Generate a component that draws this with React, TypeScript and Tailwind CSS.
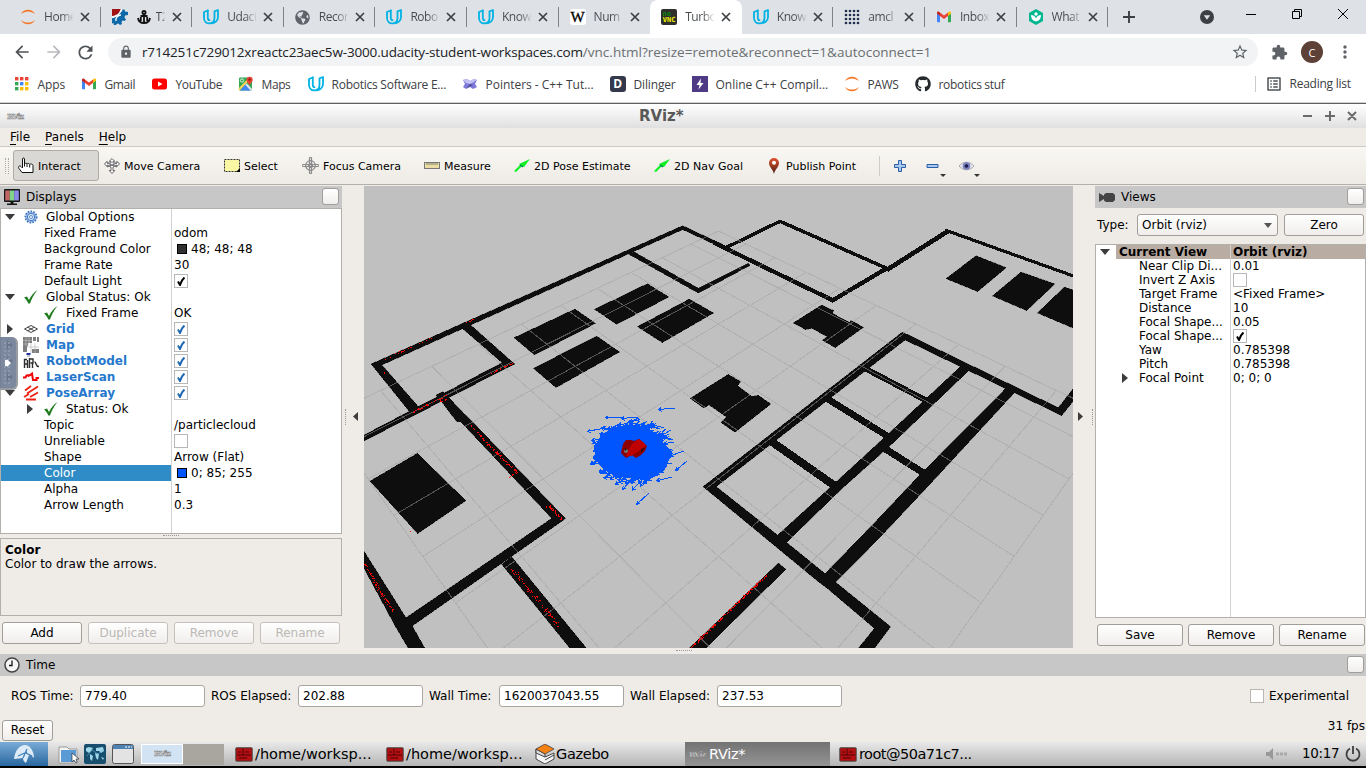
import React from "react";
import { MdArrowBack, MdArrowForward, MdRefresh, MdLock, MdStarBorder, MdExtension, MdMoreVert, MdListAlt } from "react-icons/md";
import { FaGithub, FaGlobeAmericas } from "react-icons/fa";

/* ---------- browser icons ---------- */

const Jupyter = () => (
  <svg viewBox="0 0 16 16" className="h-4 w-4" fill="#f37726">
    <path d="M1 5C2.600 2 5 .8 8 .8s5.400 1.200 7 4.200C12.900 3.200 10.500 2.400 8 2.400S3.100 3.200 1 5z" />
    <path d="M1 11C2.600 14 5 15.200 8 15.200s5.400-1.200 7-4.200c-2.100 1.800-4.500 2.600-7 2.600S3.100 12.800 1 11z" />
  </svg>
);
const Udacity = () => (
  <svg viewBox="0 0 16 16" className="h-4 w-4" fill="none" stroke="#02b3e4" strokeWidth="1.800" strokeLinejoin="round" strokeLinecap="round">
    <path d="M4.800 1.500L1 3v5.800c0 3.300 2.200 5.600 5.200 5.600 3.400 0 5.300-2.400 5.300-5.600V2.300L15 1v7c0 4-3.400 6.400-8.300 6.400" />
    <path d="M4.800 1.500v6.700c0 2 .7 3 1.700 3" />
  </svg>
);
const Gear = () => (
  <svg viewBox="0 0 16 16" className="h-4 w-4">
    <path d="M8 3l2-.5.500-2 2 0 .500 2L16 3v3l-3 .5-.5 2 1.500 2-1.500 1.500-2-.5-1 1.500.5 2-2 1-1.500-1.500-2 .5-.5 1.500H2L1.500 14 0 14.500V9l3-1z" fill="#0d69a8" />
    <path d="M4 12a5 5 0 015-6" fill="none" stroke="#fff" strokeWidth="1.300" />
    <path d="M0 0h9L6 5 1 7H0z" fill="#a31212" />
    <path d="M9.500 0C9 4 5 8 0 8.500" stroke="#fff" strokeWidth="1.300" fill="none" />
  </svg>
);
const Anchor = () => (
  <svg viewBox="0 0 14 14" className="h-3.5 w-3.5" fill="none" stroke="#111" strokeWidth="1.800">
    <circle cx="7" cy="2.600" r="1.600" />
    <path d="M7 4v9M3.500 6h7M1 8c.5 3.500 3 5 6 5s5.500-1.500 6-5M3.800 7v4M10.200 7v4" />
  </svg>
);
const Wiki = () => (
  <span className="flex h-4 w-4 items-center justify-center rounded-[3px] bg-white font-['Liberation_Serif',serif] text-[15px] leading-none text-black [-webkit-text-stroke:0.3px_#000]">W</span>
);
const NoVnc = () => (
  <span className="flex h-4 w-4 flex-col items-center justify-center rounded-[2px] bg-[#302f2c] font-['DejaVu_Sans_Mono',monospace] text-[7px] font-bold leading-[6.500px]">
    <span className="-ml-[5px] text-[#0a8a0a]">no</span>
    <span className="text-[#f3f300]">VNC</span>
  </span>
);
const Dots = () => (
  <svg viewBox="0 0 16 16" className="h-4 w-4" fill="#22304f">
    {[0, 1, 2, 3].map((r) => [0, 1, 2, 3].map((c) => <circle key={`${r}${c}`} cx={2 + c * 4} cy={2 + r * 4} r="1.350" />))}
  </svg>
);
const Gmail = () => (
  <svg viewBox="0 0 16 16" className="h-4 w-4">
    <path d="M1 4v8.500c0 .5.300.8.800.8H4V6.500z" fill="#4285f4" />
    <path d="M15 4v8.500c0 .5-.3.800-.8.800H12V6.500z" fill="#34a853" />
    <path d="M12 3.600V7l3-2.200V3.900c0-1.300-1.300-1.700-2.200-1z" fill="#fbbc04" />
    <path d="M4 3.600V7L1 4.800V3.900c0-1.300 1.300-1.700 2.200-1z" fill="#c5221f" />
    <path d="M4 3.500l4 3 4-3V7l-4 3-4-3z" fill="#ea4335" />
  </svg>
);
const Shield = () => (
  <svg viewBox="0 0 16 16" className="h-4 w-4">
    <path d="M8 0l7 4v8l-7 4-7-4V4z" fill="#02b78f" />
    <path d="M3 6c2.500 0 4.300 1.200 5 3.500C8.700 7.200 10.500 6 13 6c0 3.800-1.800 6-5 6.500C4.800 12 3 9.800 3 6z" fill="#fff" />
    <circle cx="8" cy="5" r="1.700" fill="#fff" />
  </svg>
);
const AppsGrid = () => {
  const c = ["#ea4335", "#ea4335", "#ea4335", "#34a853", "#4285f4", "#fbbc04", "#34a853", "#fbbc04", "#fbbc04"];
  return (
    <svg viewBox="0 0 16 16" className="h-4 w-4">
      {c.map((f, i) => <rect key={i} x={1 + (i % 3) * 5} y={1 + Math.floor(i / 3) * 5} width="3.400" height="3.400" fill={f} />)}
    </svg>
  );
};
const YouTube = () => (
  <svg viewBox="0 0 16 16" className="h-4 w-4"><rect x="0" y="2.500" width="15" height="11" rx="2.500" fill="#f00" /><path d="M6 5.500v5L10.500 8z" fill="#fff" /></svg>
);
const Maps = () => (
  <svg viewBox="0 0 16 16" className="h-4 w-4">
    <rect x="1" y="1.500" width="13" height="13" rx="1" fill="#34a853" />
    <path d="M7.500 8L14 14.500H2z" fill="#4285f4" /><path d="M1 13.500L12 2" stroke="#fbd75b" strokeWidth="2" />
    <path d="M8 8l6 6.500" stroke="#dde3ea" strokeWidth="2.200" />
    <circle cx="4" cy="4.500" r="1.600" fill="none" stroke="#fff" strokeWidth=".8" />
    <path d="M11.500 10C11 7 8.500 6.500 8.500 3.800a3.100 3.100 0 016.200 0C14.700 6.500 12 7 11.500 10z" fill="#ea4335" /><circle cx="11.600" cy="3.700" r="1.100" fill="#811411" />
  </svg>
);
const Cpp = () => (
  <svg viewBox="0 0 16 16" className="h-4 w-4">
    <path d="M1 4l4-1 3 2 4-2 3 1-2 4 2 3-4 2-3-2-4 2-3-2 2-3z" fill="#7b78d9" />
    <path d="M1 4l4-1 3 2 4-2 3 1-4 2.500L8 8 4 7z" fill="#c3c1f6" /><path d="M8 8l-3 4 6-3z" fill="#4a478f" />
  </svg>
);
const Dil = () => (
  <span className="flex h-4 w-4 items-center justify-center rounded-[3px] bg-[#33394a] font-['Open_Sans',sans-serif] text-[12px] font-bold leading-none text-white">D</span>
);
const Bolt = () => (
  <svg viewBox="0 0 16 16" className="h-4 w-4"><rect width="16" height="16" fill="#4f3a85" /><path d="M9 2.500L4.500 9h3L6.500 13.500 11.500 7h-3z" fill="#fff" /></svg>
);

const Close = () => (
  <svg viewBox="0 0 10 10" className="h-[10px] w-[10px]" stroke="#3c4043" strokeWidth="1.700"><path d="M1 1l8 8M9 1l-8 8" /></svg>
);

type TabT = { t: string; icon: React.ReactNode; active?: boolean; noSep?: boolean; extra?: boolean };
const TABS: TabT[] = [
  { t: "Home", icon: <Jupyter /> },
  { t: "T2", icon: <Gear />, extra: true },
  { t: "Udaci", icon: <Udacity /> },
  { t: "Recor", icon: <FaGlobeAmericas className="h-[15px] w-[15px] text-[#5f6368]" /> },
  { t: "Robo", icon: <Udacity /> },
  { t: "Know", icon: <Udacity /> },
  { t: "Num", icon: <Wiki />, noSep: true },
  { t: "Turbo", icon: <NoVnc />, active: true, noSep: true },
  { t: "Know", icon: <Udacity /> },
  { t: "amcl", icon: <Dots /> },
  { t: "Inbox", icon: <Gmail /> },
  { t: "What", icon: <Shield /> },
];

const Tab = ({ t, icon, active, noSep, extra }: TabT) => (
  <div className={`relative flex h-[34px] w-[91.600px] shrink-0 items-center pl-[11px] ${active ? "rounded-t-lg bg-white" : ""}`}>
    <span className="flex w-4 justify-center">{icon}</span>
    {extra && <span className="ml-[9px]"><Anchor /></span>}
    <span className={`${extra ? "ml-[5px] w-[9px]" : "ml-2 w-[29px]"} h-[18px] overflow-hidden whitespace-nowrap bg-gradient-to-r from-[#45494d] from-60% to-[#45494d]/10 bg-clip-text text-[12px] leading-[18px] tracking-[-0.45px] text-transparent`}>{t}</span>
    <span className="ml-[7px]"><Close /></span>
    {!noSep && <span className="absolute right-0 top-[7px] h-5 w-px bg-[#808387]" />}
  </div>
);

const MARKS: { t: string; icon: React.ReactNode; w: string }[] = [
  { t: "Apps", icon: <AppsGrid />, w: "w-[67px] tracking-[-0.1px]" },
  { t: "Gmail", icon: <Gmail />, w: "w-[71px] tracking-[-0.4px]" },
  { t: "YouTube", icon: <YouTube />, w: "w-[86px] tracking-[-0.4px]" },
  { t: "Maps", icon: <Maps />, w: "w-[70px] tracking-[-0.4px]" },
  { t: "Robotics Software E...", icon: <Udacity />, w: "w-[154px] tracking-[-0.25px]" },
  { t: "Pointers - C++ Tut...", icon: <Cpp />, w: "w-[148px] tracking-[-0.03px]" },
  { t: "Dilinger", icon: <Dil />, w: "w-[82px] tracking-[-0.15px]" },
  { t: "Online C++ Compil...", icon: <Bolt />, w: "w-[152px] tracking-[-0.02px]" },
  { t: "PAWS", icon: <Jupyter />, w: "w-[71px] tracking-[-0.4px]" },
  { t: "robotics stuf", icon: <FaGithub className="h-4 w-4 text-[#24292e]" />, w: "w-[100px] tracking-[-0.3px]" },
];

const Browser = () => (
  <div className="flex h-[104px] flex-col bg-white font-['Open_Sans','Noto_Sans',sans-serif] text-[#3c4043]">
    <div className="flex h-[34px] bg-[#dee1e6] pl-[9px]">
      {TABS.map((t, i) => <Tab key={i} {...t} />)}
      <div className="flex w-[42px] items-center justify-center">
        <svg viewBox="0 0 12 12" className="h-3 w-3" stroke="#3c4043" strokeWidth="1.900"><path d="M6 0v12M0 6h12" /></svg>
      </div>
      <div className="ml-[50px] flex items-center">
        <svg viewBox="0 0 14 14" className="h-3.5 w-3.5"><circle cx="7" cy="7" r="7" fill="#3c4043" /><path d="M3.800 5.200h6.400L7 9.800z" fill="#dee1e6" /></svg>
      </div>
      <div className="ml-[32px] flex h-[28px] items-center gap-[36px]">
        <svg viewBox="0 0 10 10" className="h-2.5 w-2.5" stroke="#000"><path d="M0 5.500h10" /></svg>
        <svg viewBox="0 0 10 10" className="h-2.5 w-2.5" stroke="#000" fill="none"><path d="M.5 2.500h7v7h-7zM2.500 2.500v-2h7v7h-2" /></svg>
        <svg viewBox="0 0 10 10" className="h-2.5 w-2.5" stroke="#000" fill="none"><path d="M0 0l10 10M10 0L0 10" /></svg>
      </div>
    </div>
    <div className="flex h-9 items-center pl-[12px]">
      <MdArrowBack className="h-[20px] w-[20px] text-[#4f5357]" />
      <MdArrowForward className="ml-[12px] h-[20px] w-[20px] text-[#b8babd]" />
      <MdRefresh className="ml-[11px] h-[21px] w-[21px] text-[#4f5357]" />
      <div className="ml-[12px] flex h-7 w-[1150px] items-center rounded-full bg-[#f1f3f4] pl-[11px]">
        <MdLock className="h-[14px] w-[14px] text-[#5f6368]" />
        <span className="ml-[9px] w-[1089px] whitespace-nowrap pt-[1px] text-[13.500px] tracking-[-0.16px] text-[#202124]">r714251c729012xreactc23aec5w-3000.udacity-student-workspaces.com<span className="tracking-[0.01px] text-[#6b6f73]">/vnc.html?resize=remote&amp;reconnect=1&amp;autoconnect=1</span></span>
        <MdStarBorder className="h-[18px] w-[18px] shrink-0 text-[#5f6368]" />
      </div>
      <MdExtension className="ml-[13px] h-[17px] w-[17px] text-[#5f6368]" />
      <span className="ml-[13px] flex h-[22px] w-[22px] items-center justify-center rounded-full bg-[#5d4037] text-[11px] text-white">C</span>
      <MdMoreVert className="ml-[12px] h-[20px] w-[20px] text-[#5f6368]" />
    </div>
    <div className="flex h-8 items-center pb-[4px] pl-[13.500px] text-[12px]">
      {MARKS.map((m) => (
        <div key={m.t} className={`flex shrink-0 items-center gap-2 whitespace-nowrap ${m.w}`}>
          {m.icon}
          <span className="pt-px">{m.t}</span>
        </div>
      ))}
      <span className="ml-[240px] h-4 w-px bg-[#c9cbce]" />
      <MdListAlt className="ml-[9px] h-[18px] w-[18px] text-[#4f5357]" />
      <span className="ml-[7px] whitespace-nowrap tracking-[-0.25px]">Reading list</span>
    </div>
    <div className="h-[2px] border-t border-[#d0d0d0] bg-[#5f5f5f]" />
  </div>
);

/* ---------- RViz icons ---------- */

const Down = () => <svg viewBox="0 0 10 6" className="h-[6px] w-[10px]"><path d="M0 0h10L5 6z" fill="#3c3c3c" /></svg>;
const Right = () => <svg viewBox="0 0 6 10" className="h-[10px] w-[6px]"><path d="M0 0v10l6-5z" fill="#3c3c3c" /></svg>;
const OkMark = () => (
  <svg viewBox="0 0 16 14" className="h-[14px] w-4"><path d="M1 7.500l3-1 2 3.500C8 6 10.500 2.500 14.500 0 10.500 5 8.500 9 7 13.500H5.300C4.300 11 3 9 1 7.500z" fill="#1e7b1e" /></svg>
);
const Flower = () => (
  <svg viewBox="0 0 16 16" className="h-4 w-4">
    <circle cx="8" cy="8" r="5.600" fill="#a9c6ec" stroke="#3f75bf" strokeWidth="1.800" strokeDasharray="1.600 1.200" />
    <circle cx="8" cy="8" r="3.700" fill="#d3e2f6" stroke="#3f75bf" strokeWidth="1" /><circle cx="8" cy="8" r="1.500" fill="#fff" stroke="#3f75bf" strokeWidth=".8" />
  </svg>
);
const GridIcon = () => (
  <svg viewBox="0 0 16 16" className="h-4 w-4" fill="none" stroke="#444" strokeWidth="1"><path d="M1.500 8L8 4.500 14.500 8 8 11.500zM4.700 6.200l6.600 3.600M11.300 6.200L4.700 9.800" /></svg>
);
const MapIcon = () => (
  <svg viewBox="0 0 16 16" className="h-4 w-4">
    <path d="M0 0h9v6H5v3H4v6H0zM10 0h3v4h-3zM14 0h2v5h-2zM9 12h7v4H9z" fill="#7e7e7e" />
    <path d="M0 3.500h9M3 0v9M6 0v6M0 7h6M4 10h12M8 6v10M12 6v10" stroke="#b9b9b9" strokeWidth=".7" />
  </svg>
);
const RobotIcon = () => (
  <svg viewBox="0 0 16 16" className="h-4 w-4">
    <path d="M3.500 0h4v2h-4z" fill="#1c2fa0" /><path d="M4 3h3" stroke="#999" />
    <path d="M1.500 6v9M1 6.500h3M4.500 7v8M6.500 5v10M6.500 6h3.500v4H7.500M9.500 10v5M11.500 9c2 0 1 5 4.500 4.500M2 11h3" fill="none" stroke="#2c2c2c" strokeWidth="1.400" />
  </svg>
);
const LaserIcon = () => (
  <svg viewBox="0 0 16 16" className="h-4 w-4" fill="none" stroke="#f00808" strokeWidth="2"><path d="M0 8.500h2.500l1-2L8 6M5 7.500l4-3 1 6.500h3.500V9H16" /></svg>
);
const PoseIcon = () => (
  <svg viewBox="0 0 16 16" className="h-4 w-4" stroke="#ee2211" strokeWidth="1.800"><path d="M2 5.500l6-4.500M4 8.500l11-7M1 12l5-3M3 14.500h10M7 12l8-4.500" /></svg>
);
const Monitor = () => (
  <svg viewBox="0 0 16 17" className="h-[17px] w-4">
    <rect width="16" height="13" rx="1" fill="#161616" /><rect x="1.200" y="1.500" width="4.600" height="10" fill="#c06464" />
    <rect x="5.800" y="1.500" width="4.400" height="10" fill="#7fd488" /><rect x="10.200" y="1.500" width="4.600" height="10" fill="#8d8bea" />
    <path d="M6.500 13h3v1.500H13V16H3v-1.500h3.500z" fill="#161616" />
  </svg>
);
const Check = ({ on, blue }: { on?: boolean; blue?: boolean }) => (
  <span className="flex h-[14px] w-[14px] items-center justify-center border border-[#b9b6b3] bg-white">
    {on && <svg viewBox="0 0 8 9" className="h-[9px] w-2"><path d="M1 4.500l2 3.500C4 4.500 5 2.500 7.500 .500" fill="none" stroke={blue ? "#1f68b4" : "#000"} strokeWidth="2" /></svg>}
  </span>
);
const Logo = () => (
  <span className="font-['DejaVu_Serif',serif] text-[8px] font-bold tracking-[-1px] text-[#eee] [-webkit-text-stroke:0.6px_#888]">RViz</span>
);
const Hand = () => (
  <svg viewBox="0 0 16 17" className="h-[17px] w-4"><path d="M4.500 11V2c0-1.300 2-1.300 2 0v5c0-1.200 2.500-1.200 2.500.3C9.200 6 11.600 6.200 11.600 7.600 12 6.600 15 6.800 15 8.500V15.500H4L1 11.500C-.2 9.500 1.500 8 3 9.500z" fill="#fff" stroke="#111" /><path d="M6.500 7v2.500M9 7.500v2.500M11.700 8v2.500" stroke="#111" /></svg>
);
const MoveCam = () => (
  <svg viewBox="0 0 16 16" className="h-4 w-4" fill="#fafafa" stroke="#666" strokeWidth="1"><path d="M8 .5l2.800 2.800H9V5h4V3.300L15.500 6 13 8.500V7L9 9v3.500h1.800L8 15.500l-2.800-3H7V9L3 7v1.500L.5 6 3 3.300V5h4V3.300H5.200zM3 5l10 4M13 5L3 9" /></svg>
);
const SelectIcon = () => (
  <svg viewBox="0 0 16 13" className="h-[13px] w-4"><rect x=".5" y=".5" width="15" height="12" fill="#f9f6a4" stroke="#333" strokeDasharray="2 1" /><path d="M16 9v4h-4z" fill="#000" /></svg>
);
const FocusIcon = () => (
  <svg viewBox="0 0 17 17" className="h-[17px] w-[17px]" fill="none" stroke="#8b8b8b" strokeWidth="1.200"><circle cx="8.500" cy="8.500" r="4.800" /><circle cx="8.500" cy="8.500" r="2" /><path d="M7.500 8.500V1l1-1 1 1v7.500V16l-1 1-1-1zM8.500 7.500H1l-1 1 1 1H16l1-1-1-1z" /></svg>
);
const Ruler = () => (
  <svg viewBox="0 0 16 7" className="h-[7px] w-4"><rect x=".5" y=".5" width="15" height="6" fill="#e9dda4" stroke="#777" /><path d="M3 1v2M5 1v2M7 1v2M9 1v2M11 1v2M13 1v2" stroke="#555" strokeWidth=".7" /></svg>
);
const Green = () => (
  <svg viewBox="0 0 16 14" className="h-[14px] w-4"><path d="M0 12l6-6-1-1L16 0 10 8 8 7 2 13z" fill="#0cf024" /><path d="M6 6l3 2" stroke="#085" strokeWidth="1.500" /></svg>
);
const Pin = () => (
  <svg viewBox="0 0 16 16" className="h-4 w-4"><defs><linearGradient id="pin" x1="0" y1="0" x2="0" y2="1"><stop offset="0" stopColor="#e2502c" /><stop offset="1" stopColor="#4a2015" /></linearGradient></defs><path d="M8 16C7 11 3 9 3 5a5 5 0 0110 0c0 4-4 6-5 11z" fill="url(#pin)" /><circle cx="8" cy="4.800" r="2" fill="#fff" /></svg>
);

const TOOLS: [React.ReactNode, string, string][] = [
  [<MoveCam key="i" />, "Move Camera", "w-[120px]"],
  [<SelectIcon key="i" />, "Select", "w-[78px]"],
  [<FocusIcon key="i" />, "Focus Camera", "w-[122px]"],
  [<Ruler key="i" />, "Measure", "w-[90px]"],
  [<Green key="i" />, "2D Pose Estimate", "w-[140px]"],
  [<Green key="i" />, "2D Nav Goal", "w-[112px]"],
  [<Pin key="i" />, "Publish Point", "w-[112px]"],
];

const Btn = ({ children, className = "", off }: { children?: React.ReactNode; className?: string; off?: boolean }) => (
  <div className={`flex items-center justify-center rounded-[3px] border bg-gradient-to-b from-white to-[#f0eeec] ${off ? "border-[#c4c0bc] text-[#bbb8b5]" : "border-[#a19d99]"} ${className}`}>{children}</div>
);

/* ---------- displays tree ---------- */

type Row = { name: string; val?: React.ReactNode; lvl: 0 | 1; arrow?: "d" | "r"; icon?: React.ReactNode; link?: boolean; sel?: boolean };
const swatch = (cls: string, t: string) => (
  <span className="flex items-center"><span className={`ml-[3px] mr-[4px] h-[10px] w-[10px] border border-black ${cls}`} />{t}</span>
);
const ROWS: Row[] = [
  { name: "Global Options", lvl: 0, arrow: "d", icon: <Flower /> },
  { name: "Fixed Frame", lvl: 1, val: "odom" },
  { name: "Background Color", lvl: 1, val: swatch("bg-[#303030]", "48; 48; 48") },
  { name: "Frame Rate", lvl: 1, val: "30" },
  { name: "Default Light", lvl: 1, val: <Check on /> },
  { name: "Global Status: Ok", lvl: 0, arrow: "d", icon: <OkMark /> },
  { name: "Fixed Frame", lvl: 1, icon: <OkMark />, val: "OK" },
  { name: "Grid", lvl: 0, arrow: "r", icon: <GridIcon />, link: true, val: <Check on blue /> },
  { name: "Map", lvl: 0, arrow: "r", icon: <MapIcon />, link: true, val: <Check on blue /> },
  { name: "RobotModel", lvl: 0, arrow: "r", icon: <RobotIcon />, link: true, val: <Check on blue /> },
  { name: "LaserScan", lvl: 0, arrow: "r", icon: <LaserIcon />, link: true, val: <Check on blue /> },
  { name: "PoseArray", lvl: 0, arrow: "d", icon: <PoseIcon />, link: true, val: <Check on blue /> },
  { name: "Status: Ok", lvl: 1, arrow: "r", icon: <OkMark /> },
  { name: "Topic", lvl: 1, val: "/particlecloud" },
  { name: "Unreliable", lvl: 1, val: <Check /> },
  { name: "Shape", lvl: 1, val: "Arrow (Flat)" },
  { name: "Color", lvl: 1, sel: true, val: swatch("bg-[#0055ff]", "0; 85; 255") },
  { name: "Alpha", lvl: 1, val: "1" },
  { name: "Arrow Length", lvl: 1, val: "0.3" },
];

const Displays = () => (
  <div className="relative flex w-[342px] flex-col">
    <div className="flex h-[22px] items-center bg-[#c7c7c7] pl-[4px] pr-[3px]">
      <Monitor />
      <span className="ml-[6px] flex-1">Displays</span>
      <Btn className="mb-[2px] h-[17px] w-[17px]" />
    </div>
    <div className="h-[326px] border border-[#b3afab] bg-white">
      <div className="flex h-full">
        <div className="w-[171px] border-r border-[#d2d2d2]">
          {ROWS.map((r, i) => (
            <div key={i} className={`flex h-4 items-center whitespace-nowrap ${r.lvl ? "pl-[22px]" : "pl-[2px]"} ${r.sel ? "bg-[#308cc6] text-white" : ""}`}>
              <span className="flex w-[13px] justify-center">{r.arrow === "d" ? <Down /> : r.arrow === "r" ? <Right /> : null}</span>
              {r.icon && <span className="ml-[7px] w-4">{r.icon}</span>}
              <span className={`${r.icon ? "ml-[7px]" : "ml-[8px]"} ${r.link ? "font-bold text-[#2678cc]" : ""}`}>{r.name}</span>
            </div>
          ))}
        </div>
        <div className="flex-1">
          {ROWS.map((r, i) => <div key={i} className="flex h-4 items-center whitespace-nowrap pl-[2px]">{r.val}</div>)}
        </div>
      </div>
    </div>
    <div className="flex h-[4px] items-start justify-center"><span className="mt-px w-4 border-t border-dotted border-[#999]" /></div>
    <div className="h-[78px] border border-[#b3afab] px-1 pt-[4px] leading-[14px]">
      <div className="font-bold">Color</div>
      <div>Color to draw the arrows.</div>
    </div>
    <div className="mt-[6px] flex gap-[6px] pl-[2px]">
      <Btn className="h-[22px] w-[80px]">Add</Btn>
      <Btn off className="h-[22px] w-[80px]">Duplicate</Btn>
      <Btn off className="h-[22px] w-[80px]">Remove</Btn>
      <Btn off className="h-[22px] w-[80px]">Rename</Btn>
    </div>
    <div className="absolute left-0 top-[151px] flex h-[53px] w-[18px] items-center justify-center rounded-r-[6px] border-b-2 border-r-2 border-[#989ba0] bg-[#6e7b92]/90">
      <span className="absolute left-[4px] top-[5px] h-[42px] w-[6px] border-x-2 border-dotted border-[#8b98ad]" />
      <svg viewBox="0 0 6 8" className="relative -ml-px h-2 w-[6px]"><path d="M0 1h2V0l4 4-4 4V7H0z" fill="#fff" /></svg>
    </div>
  </div>
);

/* ---------- views panel ---------- */

const VIEW: [string, React.ReactNode][] = [
  ["Near Clip Di...", "0.01"],
  ["Invert Z Axis", <Check key="a" />],
  ["Target Frame", "<Fixed Frame>"],
  ["Distance", "10"],
  ["Focal Shape...", "0.05"],
  ["Focal Shape...", <Check key="b" on />],
  ["Yaw", "0.785398"],
  ["Pitch", "0.785398"],
  ["Focal Point", "0; 0; 0"],
];

const Views = () => (
  <div className="flex w-[271px] flex-col">
    <div className="flex h-[22px] items-center bg-[#c7c7c7] pl-[4px] pr-[2px]">
      <svg viewBox="0 0 16 9" className="h-[9px] w-4"><path d="M0 0l5 3V1.500L7 0h7l2 2v5l-2 2H7L5 7.500V6L0 9z" fill="#444" /></svg>
      <span className="ml-[6px] flex-1">Views</span>
      <Btn className="mb-[2px] h-[17px] w-[17px]" />
    </div>
    <div className="mt-[6px] flex items-center pl-[2px]">
      <span className="w-[40px]">Type:</span>
      <Btn className="h-[22px] w-[141px]"><span className="flex-1 pl-[4px]">Orbit (rviz)</span><span className="mr-[5px]"><svg viewBox="0 0 8 5" className="h-[5px] w-2"><path d="M0 0h8L4 5z" fill="#555" /></svg></span></Btn>
      <Btn className="ml-[6px] h-[22px] w-[80px]">Zero</Btn>
    </div>
    <div className="mt-[8px] flex h-[374px] border border-[#b3afab] bg-white">
      <div className="w-[135px] border-r border-[#d2d2d2]">
        <div className="flex h-[14px] items-center">
          <span className="flex w-5 pl-[4px]"><Down /></span>
          <span className="flex h-[14px] flex-1 items-center bg-[#b9aca3] pl-[3px] font-bold">Current View</span>
        </div>
        {VIEW.map(([n], i) => (
          <div key={i} className="flex h-[14px] items-center whitespace-nowrap">
            <span className="ml-[26px] flex w-[17px]">{i === 8 && <Right />}</span>{n}
          </div>
        ))}
      </div>
      <div className="flex-1">
        <div className="flex h-[14px] items-center bg-[#b9aca3] pl-[2px] font-bold">Orbit (rviz)</div>
        {VIEW.map(([, v], i) => <div key={i} className="flex h-[14px] items-center whitespace-nowrap pl-[2px]">{v}</div>)}
      </div>
    </div>
    <div className="mt-[6px] flex gap-[5px] pl-[2px]">
      <Btn className="h-[22px] w-[86px]">Save</Btn>
      <Btn className="h-[22px] w-[86px]">Remove</Btn>
      <Btn className="h-[22px] w-[86px]">Rename</Btn>
    </div>
  </div>
);

/* ---------- 3D scene ---------- */

const rng = (seed: number) => {
  let s = seed;
  return () => {
    s = (s * 1664525 + 1013904223) % 4294967296;
    return s / 4294967296;
  };
};

// Ground-plane projection for an orbit camera: distance 10, yaw and pitch 45 degrees.
const project = (u: number, v: number) => {
  const z = 10 + (u + v) / 2;
  return `${(718.5 + (394.3 * (u - v)) / z).toFixed(1)},${(417 - (278.8 * (u + v)) / z).toFixed(1)}`;
};
const GRID = Array.from({ length: 11 }, (_, i) => i - 5)
  .map((k) => `M${project(k, -5)}L${project(k, 5)}M${project(-5, k)}L${project(5, k)}`)
  .join("");

// x1, y1, x2, y2, hit count, spread
const HITS = [
  [376, 362.5, 431, 338, 20, 0.7], [466, 322, 473.500, 319, 8, 0.5], [383, 371.500, 385, 373, 3, 0.3],
  [412, 412, 446, 395, 34, 0.7], [440, 401, 446, 399, 8, 0.7], [491, 373, 512, 363, 24, 0.6],
  [471, 425, 484, 440, 18, 0.7], [484, 440, 516.5, 472, 70, 0.9], [508, 477.500, 516, 472, 6, 0.5],
  [545, 507, 550, 505, 4, 0.5], [549, 506, 561, 519, 36, 1.1], [513, 570, 560, 627, 85, 1.700],
  [364, 562, 378, 588, 34, 1.5], [378, 588, 393.500, 612, 34, 1.300], [410, 531, 410, 531, 1, 0.1],
  [691, 647, 768, 573, 150, 1],
];
const laser = (() => {
  const r = rng(7);
  let d = "";
  for (const [x1, y1, x2, y2, n, j] of HITS) {
    for (let i = 0; i < n; i++) {
      const t = r();
      const x = Math.round(x1 + (x2 - x1) * t + (r() - 0.5) * 2 * j);
      const y = Math.round(y1 + (y2 - y1) * t + (r() - 0.5) * 2 * j);
      d += `M${x} ${y}h1v1h-1z`;
    }
  }
  return d;
})();

const arrow = (x: number, y: number, a: number, len: number) => {
  const tx = x + Math.cos(a) * len;
  const ty = y + Math.sin(a) * len;
  const h = (o: number) => `M${tx.toFixed(1)} ${ty.toFixed(1)}l${(-Math.cos(a + o) * 4).toFixed(1)} ${(-Math.sin(a + o) * 4).toFixed(1)}`;
  return `M${x.toFixed(1)} ${y.toFixed(1)}L${tx.toFixed(1)} ${ty.toFixed(1)}${h(0.5)}${h(-0.5)}`;
};
const cloud = (() => {
  const r = rng(21);
  let d = "";
  for (let i = 0; i < 150; i++) {
    const t = r() * Math.PI * 2;
    const k = 0.8 + r() * 0.34;
    const x = 638 + Math.cos(t) * 34 * k;
    const y = 450 + Math.sin(t) * 28 * k;
    d += arrow(x, y, Math.PI - 0.35 + (r() - 0.5) * 1.3, 9 + r() * 5);
  }
  return d;
})();

const Scene = () => (
  <svg viewBox="364 186 709 462" className="h-[462px] w-[709px] shrink-0 bg-[#c0c0c0]" shapeRendering="crispEdges">
    <g fill="#0e0e0e" stroke="none">
      <g transform="translate(360 185) scale(.33333)" stroke="#0e0e0e" strokeWidth="1">
        <path d="M33 537L968 122 1085 177V188L968 134 66 540 178 668 150 682z" />
        <path d="M304 428L330 418 464 537 434 540z" />
        <path d="M428 532L464 537 12 768V750z" />
        <path d="M228 630L248 620 265 636 335 710H290L243 648z" />
        <path d="M462 458L645 372 707 415 523 510zM520 550L710 453 779 501 588 608zM703 373L862 296 927 336 770 418zM832 425L988 342 1061 384 907 473z" />
        <path d="M806 207L822 201 1015 310 1165 235 1170 241 1015 324z" strokeWidth="2" />
      </g>
      <g transform="translate(360 415) scale(.33333)" stroke="#0e0e0e" strokeWidth="1">
        <path d="M281-2L316-2 617 311 157 633 195 700H145L107 636 12 460V408L138 608 575 310z" />
        <path d="M425 448L455 425 680 700H630z" />
        <path d="M30 198L172 115 318 257 173 356z" />
      </g>
      <g transform="translate(715 185) scale(.33333)" stroke="#0e0e0e" strokeWidth="1">
        <path d="M190 1134L213 1153-28 1390H-78z" />
        <path d="M693 281L783 212 874 248 788 320zM832 333L918 261 1020 297 935 377zM967 384L1048 306 1078 316V431z" />
        <path d="M234 414L320 360 357 377 352 385 404 412 408 406 446 427 361 488 322 466 337 455 290 430 272 434z" />
        <path d="M-75 640L40 568 77 590 68 602 110 634 130 631 168 657 60 742 17 712 34 696-18 660-33 670z" />
        <path d="M-36 905L562 441 577 460 4 905 190 1052 527 1325 477 1392H428L478 1330 340 1213 312 1192z" />
        <path d="M562 441L1030 668 1078 606V645L1040 692 558 459z" />
        <path d="M738 543L772 547 530 778 380 912 213 1074 186 1052 340 912 500 765z" />
        <path d="M872 610L907 614 655 887 500 1052 362 1192 328 1168 470 1022 612 872z" />
        <g fill="none">
          <path d="M-5 172L353 346 515 250" strokeWidth="13" />
          <path d="M35 187L195 109 520 252" strokeWidth="10.500" />
          <path d="M515 255L698 139" strokeWidth="14" />
          <path d="M690 138L698 138 1078 274" strokeWidth="9.500" />
          <path d="M440 545L650 655" strokeWidth="17" />
          <path d="M335 640L520 755" strokeWidth="20" />
          <path d="M170 770L360 903" strokeWidth="24" />
          <path d="M505 788L635 870" strokeWidth="21" />
        </g>
      </g>
    </g>
    <path d={GRID} fill="none" stroke="#a0a0a4" strokeOpacity=".5" />
    <path d={laser} fill="#ff0000" />
    <g fill="none" stroke="#0055ff">
      <ellipse cx="630" cy="451.500" rx="35" ry="26" fill="#0055ff" />
      <path d="M660 440L672 452 664 470 648 480 632 478z" fill="#0055ff" />
      <path d={cloud} />
      <path d={arrow(622, 417.5, Math.PI, 17) + arrow(638, 417, 3.05, 17) + arrow(675, 408, 3.05, 17) + arrow(649, 493, 2.4, 17) + arrow(605, 428, 2.95, 18) + arrow(671, 430, 2.6, 15) + arrow(687, 461, 2.450, 15) + arrow(684, 451, 2.8, 15) + arrow(604, 459, 2.8, 15) + arrow(672, 477, 2.9, 16)} />
    </g>
    <g shapeRendering="auto">
      <path d="M623 444l3-4 5 0 3 1 5-2 5 4 3 3-2 5-4 4-5 3-4-3-6 3-5-5z" fill="#8e0000" />
      <path d="M632 444l7-5 5 4 2 3-9 6-6 4-5 0 2-5z" fill="#bf0000" />
      <path d="M641 449l4-1-4 5z" fill="#3a0707" /><circle cx="626" cy="451" r="2" fill="#777" /><circle cx="625.500" cy="449.500" r="1" fill="#111" />
    </g>
  </svg>
);

/* ---------- bottom ---------- */

const Field = ({ l, v, w }: { l: string; v: string; w: string }) => (
  <div className="flex items-center whitespace-nowrap">
    <span className={w}>{l}</span>
    <span className="mr-[6px] flex h-[22px] w-[125px] items-center rounded-[3px] border border-[#a9a5a1] bg-white pl-[4px]">{v}</span>
  </div>
);

const Term = () => (
  <svg viewBox="0 0 18 15" className="h-[15px] w-[18px] shrink-0"><rect x=".5" y=".5" width="17" height="14" rx="1.500" fill="#8c1a1a" stroke="#6d6664" /><rect x="2" y="2" width="14" height="11" fill="#b80f12" /><path d="M2 8h14M8 2v6M3 5h3M10 5h4M4 11h8" stroke="#4a0507" strokeWidth="1" /></svg>
);

const Taskbar = () => (
  <div className="flex h-[26px] items-center border-b-2 border-black bg-gradient-to-b from-[#e9e9e9] to-[#b5b5b5] text-[14.500px]">
    <div className="flex h-full w-[48px] items-center justify-center bg-gradient-to-b from-[#79abd6] to-[#28689f]">
      <svg viewBox="0 0 22 20" className="h-5 w-[22px]"><path d="M1 15C2 6 7 1 12 1c5 0 9 6 9 13-2-2-3-3-5-3l-3 8c-2-1-3-3-3-5-3 0-6 1-9 1z" fill="#dcebf7" /><path d="M5 12l9-4M10 14l4-9M13 9l6 3" stroke="#3d7db5" strokeWidth="1.200" /></svg>
    </div>
    <svg viewBox="0 0 22 20" className="ml-[10px] h-5 w-[22px]"><path d="M1 3h8l2 2h8v14H1z" fill="#f4f4f4" stroke="#999" /><rect x="3" y="6" width="15" height="12" fill="#5a9bd5" /><path d="M14 9v9l2-2 2 3 1-1-1-3h3z" fill="#fff" stroke="#333" strokeWidth=".7" /></svg>
    <svg viewBox="0 0 22 20" className="ml-[4px] h-5 w-[22px]"><rect width="22" height="20" rx="2" fill="#174d6d" /><path d="M2 4l3-1 4 1-2 3-2 2-3-2zM6 10l3 2-1 5-2-2zM12 4l7-1 1 4-3 2-2-2-3 0zM11 9l4 1-1 6-2-2zM17 13l3 1-1 2z" fill="#9fd6ea" /><path d="M3 12l5-6 6 4 6-5" stroke="#5fb0d0" strokeWidth=".6" fill="none" /></svg>
    <svg viewBox="0 0 22 20" className="ml-[6px] h-5 w-[22px]"><rect x=".5" y=".5" width="21" height="19" rx="2" fill="#e3e3e3" stroke="#555" /><path d="M1 1h20v4H1z" fill="#4e82b5" /><path d="M13 3h7" stroke="#fff" strokeDasharray="2 1" /></svg>
    <div className="ml-[7px] flex h-5 w-[42px] items-center justify-center border border-white bg-[#d2e4f4] pb-[2px]"><Logo /></div>
    <div className="h-[21px] w-[41px] bg-[#a9a6a0]" />
    <div className="ml-[11px] flex w-[151px] items-center whitespace-nowrap"><Term /><span className="ml-[2px]">/home/worksp...</span></div>
    <div className="flex w-[149px] items-center whitespace-nowrap"><Term /><span className="ml-[2px]">/home/worksp...</span></div>
    <div className="flex w-[150px] items-center whitespace-nowrap">
      <svg viewBox="0 0 20 20" className="h-5 w-5"><path d="M1 5v10l9 5 9-5V9L10 13z" fill="#f5f5f5" stroke="#444" /><path d="M1 5l9 5v3L1 9zM10 16l9-5" fill="#ddd" stroke="#444" /><path d="M10 0l9 5-9 5-9-5z" fill="#f58113" stroke="#444" strokeWidth=".8" /></svg>
      <span className="ml-px tracking-[-0.3px]">Gazebo</span>
    </div>
    <div className="flex h-full w-[145px] items-center whitespace-nowrap bg-gradient-to-b from-[#737373] to-[#949494] pl-[4px] tracking-[-0.3px] text-white"><span className="flex w-[20px]"><Logo /></span>RViz*</div>
    <div className="ml-[9px] flex w-[150px] items-center whitespace-nowrap"><Term /><span className="ml-[2px] tracking-[-0.52px]">root@50a71c7...</span></div>
    <div className="flex flex-1 items-center justify-end pr-[5px]">
      <svg viewBox="0 0 22 12" className="h-3 w-[22px]"><path d="M0 4h3l4-4v12L3 8H0z" fill="#999" /><path d="M10 6h3M14 6h3M18 6h3" stroke="#aaa" strokeWidth="3" /></svg>
      <span className="ml-[14px] w-[43px] text-[13.500px] tracking-[-0.3px]">10:17</span>
      <svg viewBox="0 0 16 16" className="h-4 w-4" fill="none" stroke="#3d3d3d" strokeWidth="1.800"><path d="M5 2.500a6.500 6.500 0 106 0M8 0v8" /></svg>
    </div>
  </div>
);

export default function App() {
  return (
    <div className="flex h-[768px] w-[1366px] flex-col overflow-hidden bg-[#efebe7] font-['DejaVu_Sans',sans-serif] text-[12px] leading-none text-black">
      <Browser />
      <div className="flex h-[24px] items-center bg-gradient-to-b from-white to-[#e0e0e0] pl-[7px] pr-[8px]">
        <span className="w-[632px] pb-[3px]"><Logo /></span>
        <span className="flex-1 text-[15px] font-bold text-[#585858]">RViz*</span>
        <svg viewBox="0 0 54 12" className="mr-[1px] h-3 w-[54px]" stroke="#6a6a6a" strokeWidth="2"><path d="M0 6h9M22 6h10M27 1v10M45 2l8 8M53 2l-8 8" /></svg>
      </div>
      <div className="flex h-[18px] items-center gap-[15px] pl-[10px]">
        {["File", "Panels", "Help"].map((m) => (
          <span key={m}><span className="underline underline-offset-[3px]">{m[0]}</span>{m.slice(1)}</span>
        ))}
      </div>
      <div className="flex h-[39px] items-center border-b border-t border-b-[#b3afab] border-t-[#cdc9c5] bg-gradient-to-b from-[#f9f7f3] to-[#eeebe5] text-[11px]">
        <span className="ml-[5px] h-4 w-[4px] border-x border-dotted border-[#aaa]" />
        <div className="ml-[4px] flex h-[31px] w-[86px] items-center rounded-[3px] border border-[#aeaaa6] bg-[#dad8d4] pl-[4px]"><Hand /><span className="ml-[4px] pt-px">Interact</span></div>
        <span className="w-[5px]" />
        {TOOLS.map(([ic, t, w]) => (
          <div key={t} className={`flex shrink-0 items-center gap-1 whitespace-nowrap ${w}`}>{ic}<span className="pt-[2px]">{t}</span></div>
        ))}
        <span className="ml-[1px] h-5 w-px bg-[#cfccc7]" />
        <svg viewBox="0 0 12 12" className="ml-[14px] h-3 w-3"><path d="M4.500.5h3v4h4v3h-4v4h-3v-4h-4v-3h4z" fill="#a5c9ef" stroke="#2b5fa8" /></svg>
        <svg viewBox="0 0 22 20" className="ml-[20px] mt-[8px] h-5 w-[22px]"><path d="M1 4.500h11v3H1z" fill="#a5c9ef" stroke="#2b5fa8" /><path d="M14 14h6l-3 3z" fill="#333" /></svg>
        <svg viewBox="0 0 22 20" className="ml-[11px] mt-[8px] h-5 w-[22px]"><path d="M0 6c4-5 11-5 15 0-4 5-11 5-15 0z" fill="#e4e4ec" stroke="#aaa" /><circle cx="7.500" cy="6" r="3.800" fill="#7a80bf" /><circle cx="7.500" cy="6" r="1.800" fill="#1a1a4a" /><path d="M15 14h6l-3 3z" fill="#333" /></svg>
      </div>
      <div className="mt-[1px] flex h-[468px]">
        <Displays />
        <div className="flex w-[22px] items-center pb-[7px] pl-[3px]"><span className="h-4 border-l border-dotted border-[#999]" /><svg viewBox="0 0 5 9" className="ml-[7px] h-[9px] w-[5px]"><path d="M5 0v9L0 4.500z" fill="#3c3c3c" /></svg></div>
        <div className="flex flex-col items-center"><Scene /><span className="ml-[-70px] mt-[2px] w-4 border-t border-dotted border-[#999]" /></div>
        <div className="flex w-[22px] items-center pb-[7px] pl-[5px]"><svg viewBox="0 0 5 9" className="h-[9px] w-[5px]"><path d="M0 0v9l5-4.500z" fill="#3c3c3c" /></svg><span className="ml-[9px] h-4 border-l border-dotted border-[#999]" /></div>
        <Views />
      </div>
      <div className="flex h-[22px] items-center bg-[#c7c7c7] pl-[4px] pr-[2px]">
        <svg viewBox="0 0 16 16" className="h-4 w-4"><circle cx="8" cy="8" r="7" fill="#f5f5f5" stroke="#444" strokeWidth="1.500" /><path d="M8 3.500V8.500H5" fill="none" stroke="#111" strokeWidth="1.300" /></svg>
        <span className="ml-[6px] flex-1">Time</span>
        <Btn className="mb-[2px] h-[17px] w-[17px]" />
      </div>
      <div className="mt-[9px] flex items-center pl-[11px]">
        <Field l="ROS Time:" v="779.40" w="w-[69px]" />
        <Field l="ROS Elapsed:" v="202.88" w="w-[87px]" />
        <Field l="Wall Time:" v="1620037043.55" w="w-[70px]" />
        <Field l="Wall Elapsed:" v="237.53" w="w-[87px]" />
        <span className="flex flex-1 items-center justify-end gap-[5px] pr-[17px]"><Check />Experimental</span>
      </div>
      <div className="mb-[1px] mt-[12px] flex flex-1 items-center justify-between pl-[2px] pr-[1px]">
        <Btn className="h-[21px] w-[51px]">Reset</Btn>
        <span className="pb-[8px]">31 fps</span>
      </div>
      <Taskbar />
    </div>
  );
}
